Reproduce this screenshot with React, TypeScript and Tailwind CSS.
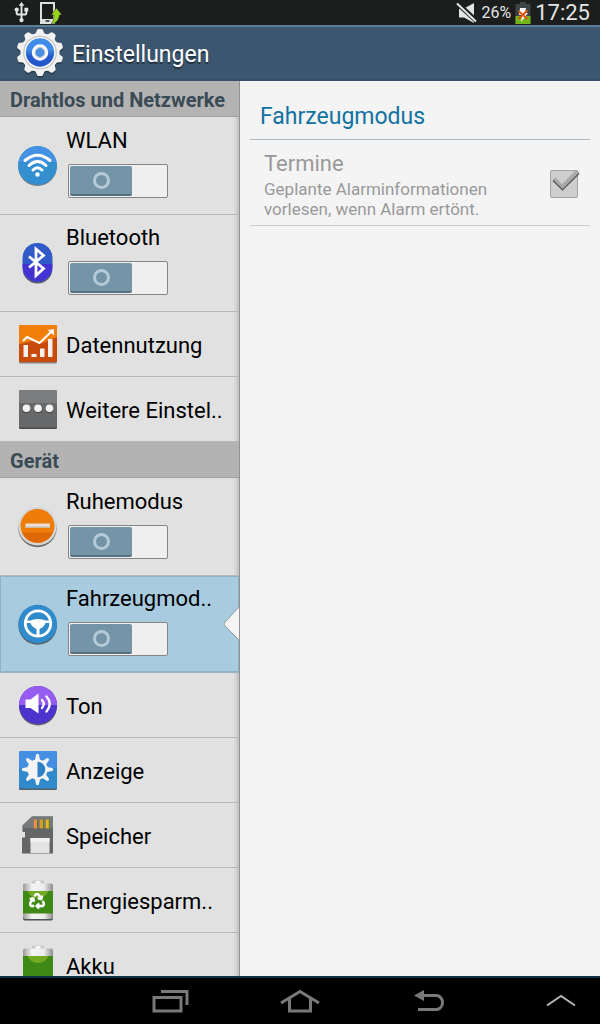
import { useState, type ReactNode } from "react";
import { MdUsb } from "react-icons/md";
import { FaRecycle } from "react-icons/fa";

function GearLogo() {
  return (
    <svg viewBox="0 0 48 50" className="h-[50px] w-12" aria-hidden="true">
      <defs>
        <linearGradient id="gear-face" x1="0" y1="0" x2="0" y2="1">
          <stop offset="0.4" stopColor="#3f8de8" />
          <stop offset="0.65" stopColor="#2458cc" />
        </linearGradient>
      </defs>
      {[["#27394a", 1.5], ["#f1f1f1", 0]].map(([fill, dy]) => (
        <g key={fill} fill={fill as string} transform={`translate(24 ${24.5 + Number(dy)})`}>
          <circle r="19.5" />
          {[0, 36, 72, 108, 144, 180, 216, 252, 288, 324].map((a) => (
            <path key={a} d="M-5.5-17.5Q-3.6-20-3.2-22Q-2.8-23.5-1.5-23.5H1.5Q2.8-23.5 3.2-22Q3.6-20 5.5-17.5Z" transform={`rotate(${a})`} />
          ))}
        </g>
      ))}
      <circle cx="24" cy="24.5" r="16.2" fill="#fff" stroke="#c4c4c8" strokeWidth="1.2" />
      <circle cx="24" cy="24.5" r="14.2" fill="url(#gear-face)" />
      <circle cx="24" cy="24.5" r="6.4" fill="#4a90e0" stroke="#fff" strokeWidth="3.6" />
      <circle cx="24" cy="24.5" r="5" fill="none" stroke="#b9bcc6" strokeWidth="1" />
    </svg>
  );
}

function Shell({ children }: { children: ReactNode }) {
  return (
    <svg viewBox="0 0 40 42" className="h-[42px] w-10" aria-hidden="true">
      {children}
    </svg>
  );
}

const WifiIcon = () => (
  <Shell>
    <circle cx="19.5" cy="21.6" r="19.4" fill="#77797c" />
    <circle cx="19.5" cy="20.5" r="19.4" fill="#338fd0" />
    <path d="M2.5 11.5A19.4 19.4 0 0 1 36.5 11.5Q38 14 38.5 17H.5Q1 14 2.5 11.5Z" fill="#4591e2" />
    <g fill="none" stroke="#fff" strokeWidth="3" strokeLinecap="round">
      <path d="M7 15.5Q19.5 5 32 15.5" />
      <path d="M11 20.5Q19.5 12.5 28 20.5" />
      <path d="M15 25Q19.5 20.5 24 25" />
    </g>
    <circle cx="19.5" cy="29.5" r="2.2" fill="#fff" />
  </Shell>
);

const BluetoothIcon = () => (
  <Shell>
    <rect x="4.7" y="2" width="29.6" height="39.5" rx="14.5" fill="#5d5d70" />
    <rect x="4.7" y="1" width="29.6" height="38.8" rx="14.5" fill="#2f5ac8" />
    <path d="M4.7 22H34.3V25A14.8 14.5 0 0 1 4.7 25Z" fill="#4433d2" />
    <path d="M11 14.5L25.500 26.500L18 33.500V7L25.500 13.500L11 25.500" fill="none" stroke="#fff" strokeWidth="2.8" />
  </Shell>
);

const DataIcon = () => (
  <Shell>
    <rect x="1" y="3" width="38" height="37.5" rx="1.5" fill="#87837f" />
    <rect x="1" y="2" width="38" height="37" rx="1.5" fill="#c94b0c" />
    <path d="M1 3.5Q1 2 2.5 2H37.5Q39 2 39 3.5V14L24 20L14 18L1 21Z" fill="#f07f0a" />
    <g fill="#f3f0ee">
      <path d="M5.500 22H10V34H5.500zM13.500 31H18.500V34H13.500zM22 25.500H26.500V34H22zM30 16H34.500V34H30z" />
      <path d="M29.500 7L36 6V12.500z" />
    </g>
    <path d="M5 18L9 14L21.500 20L34 8" fill="none" stroke="#fff" strokeWidth="2" />
  </Shell>
);

const MoreIcon = () => (
  <Shell>
    <rect x="1" y="3" width="38" height="38" rx="1.5" fill="#47494b" />
    <rect x="1" y="2" width="38" height="37.5" rx="1.5" fill="#66686a" />
    <path d="M1 3.5Q1 2 2.5 2H37.5Q39 2 39 3.5V15H1Z" fill="#7b7d7f" />
    {[8.5, 20, 31.5].map((x) => (
      <g key={x}>
        <circle cx={x} cy="21.500" r="3.8" fill="#4a4c4e" />
        <circle cx={x} cy="20.200" r="3.8" fill="#f2f2f2" />
      </g>
    ))}
  </Shell>
);

const QuietIcon = () => (
  <Shell>
    <circle cx="19.5" cy="22" r="19.2" fill="#6b6b6b" />
    <circle cx="19.5" cy="20.3" r="19.2" fill="#d6d6d6" />
    <circle cx="19.5" cy="20" r="17" fill="#ee7c08" />
    <path d="M4 26.500H35A17 17 0 0 1 4 26.500Z" fill="#dd6805" />
    <rect x="7.500" y="17.500" width="24.500" height="4.500" fill="#eadfd5" />
    <rect x="7.500" y="20.500" width="24.500" height="1.500" fill="#cdbba8" />
  </Shell>
);

const CarIcon = () => (
  <Shell>
    <circle cx="19.700" cy="22.500" r="19.300" fill="#59606b" />
    <circle cx="19.700" cy="21" r="19.300" fill="#2f8bcb" />
    <circle cx="20" cy="20.500" r="12.700" fill="none" stroke="#fff" strokeWidth="2.800" />
    <path d="M8 17.500H12.500Q15 16 20 16T27.500 17.500H32V20H27.500Q26 24 21.500 26V32.500H18.500V26Q14 24 12.500 20H8Z" fill="#fff" />
  </Shell>
);

const SoundIcon = () => (
  <Shell>
    <circle cx="20" cy="22.500" r="19" fill="#62626e" />
    <circle cx="20" cy="21" r="19" fill="#4c34cd" />
    <path d="M1 21A19 19 0 0 1 39 21Z" fill="#965df0" />
    <path d="M7.500 15.500H12.500L20.500 9.500V29.500L12.500 24H7.500Z" fill="#fff" />
    <g fill="none" stroke="#fff" strokeWidth="2.400" strokeLinecap="round">
      <path d="M24 16Q27.500 20 24 24" />
      <path d="M28.500 12.500Q35 20 28.500 27.500" />
    </g>
  </Shell>
);

const DisplayIcon = () => (
  <Shell>
    <rect x="1" y="3.500" width="38" height="37.500" rx="1.500" fill="#52616e" />
    <rect x="1" y="2" width="38" height="37.500" rx="1.500" fill="#3089cb" />
    <path d="M1 3.500Q1 2 2.500 2H37.500Q39 2 39 3.500V19H1Z" fill="#458fe2" />
    <g transform="translate(19.500 20.500)" fill="#f4f4f4">
      {[0, 45, 90, 135, 180, 225, 270, 315].map((a) => (
        <path key={a} d="M-2.600-9L-1.400-15Q0-16.500 1.400-15L2.600-9Z" transform={`rotate(${a})`} />
      ))}
      <circle r="10.200" />
      <path d="M0-7.800A7.800 7.800 0 0 1 0 7.800Z" fill="#2e81c4" />
    </g>
  </Shell>
);

const StorageIcon = () => (
  <Shell>
    <path d="M14 2.500H35V39.500H4V23.500H7V18H4.500V11.500Z" fill="#636566" />
    <path d="M14 2.500H35V14H4.500V11.500Z" fill="#777879" />
    <path d="M12.500 24H31.500V39H12.500z" fill="#e4e4e4" />
    <path d="M12.500 24H31.500V28H12.500z" fill="#f0f0f0" />
    <g strokeWidth="3.500">
      <path d="M17.500 5.500V14.500" stroke="#e98d4e" />
      <path d="M23.500 5.500V14.500" stroke="#d99d26" />
      <path d="M29.500 5.500V14.500" stroke="#e8b31b" />
    </g>
    <path d="M19.500 5.500V14.500M25.500 5.500V14.500M31.300 5.500V14.500" stroke="#4f7f2e" />
  </Shell>
);

function Battery({ children }: { children?: ReactNode }) {
  return (
    <Shell>
      <defs>
        <linearGradient id="battery-metal" x1="0" x2="1" y1="0" y2="0">
          <stop offset="0" stopColor="#999" />
          <stop offset="0.3" stopColor="#f4f4f4" />
          <stop offset="0.7" stopColor="#ececec" />
          <stop offset="1" stopColor="#8c8c8c" />
        </linearGradient>
      </defs>
      <rect x="14" y="1.500" width="12" height="5" rx="1.500" fill="#c9c9c9" />
      <rect x="17.500" y="2" width="5" height="3" fill="#f8f8f8" />
      <rect x="5" y="35" width="30" height="6.500" rx="2" fill="#4e5358" />
      <rect x="5" y="4.500" width="30" height="35.500" rx="2" fill="url(#battery-metal)" />
      <rect x="5" y="12" width="30" height="22.500" fill="#3f8a17" />
      <path d="M9.500 12H30.500Q27.500 19 20 19T9.500 12Z" fill="#74a922" />
      {children}
    </Shell>
  );
}

const SaverIcon = () => (
  <Battery>
    <FaRecycle x="11" y="14" width="18" height="18" color="#fff" stroke="#fff" strokeWidth="24" />
  </Battery>
);

const FullBatteryIcon = () => <Battery />;

type Item = { name: string; icon: () => ReactNode; toggle?: boolean; active?: boolean };

const wireless: Item[] = [
  { name: "WLAN", icon: WifiIcon, toggle: true },
  { name: "Bluetooth", icon: BluetoothIcon, toggle: true },
  { name: "Datennutzung", icon: DataIcon },
  { name: "Weitere Einstel..", icon: MoreIcon },
];

const device: Item[] = [
  { name: "Ruhemodus", icon: QuietIcon, toggle: true },
  { name: "Fahrzeugmod..", icon: CarIcon, toggle: true, active: true },
  { name: "Ton", icon: SoundIcon },
  { name: "Anzeige", icon: DisplayIcon },
  { name: "Speicher", icon: StorageIcon },
  { name: "Energiesparm..", icon: SaverIcon },
  { name: "Akku", icon: FullBatteryIcon },
];

function Toggle({ label }: { label: string }) {
  const [on, setOn] = useState(false);
  return (
    <button
      type="button"
      role="switch"
      aria-checked={on}
      aria-label={label}
      onClick={() => setOn(!on)}
      className={`ml-0.5 flex h-[34px] w-[100px] rounded-xs border border-[#858585] bg-[#efefef] p-px ${on ? "justify-end" : "justify-start"}`}
    >
      <span className="flex h-[30px] w-[62px] items-center justify-center rounded-xs border-b-2 border-[#56707f] bg-[#7494a7]">
        <span className="size-[17px] rounded-full border-3 border-[#b5cad6]" />
      </span>
    </button>
  );
}

function Row({ item }: { item: Item }) {
  const Icon = item.icon;
  return (
    <li
      className={`relative flex shrink-0 items-center gap-2 border-b pl-[18px] ${item.toggle ? "h-[97px]" : "h-[65px]"} ${
        item.active ? "border-[#a0b2bc] bg-[#a9cbdf] shadow-[inset_0_0_0_1px_#8fb2c6]" : "border-[#b9b9b9]"
      }`}
    >
      <Icon />
      {item.toggle ? (
        <div className="flex h-full flex-col gap-2 pt-2">
          <a href="#detail" className="text-[22px] leading-[30px]">{item.name}</a>
          <Toggle label={item.name} />
        </div>
      ) : (
        <a href="#detail" className="pt-1 text-[22px] leading-[30px] whitespace-nowrap">{item.name}</a>
      )}
      {item.active && (
        <svg viewBox="0 0 16 36" className="absolute top-[30px] right-0 h-9 w-4" aria-hidden="true">
          <path d="M16 1L2 16Q0 18 2 20L16 34Z" fill="#f4f4f4" />
          <path d="M16 1L2 16Q0 18 2 20L16 34" fill="none" stroke="#8f9ca4" />
        </svg>
      )}
    </li>
  );
}

function Group({ title, items }: { title: string; items: Item[] }) {
  return (
    <section>
      <h2 className="mb-px h-9 border-b border-[#a2a2a2] bg-[#b3b3b3] pl-2.5 text-[20px] leading-[38px] font-bold whitespace-nowrap text-[#3b4b55]">
        {title}
      </h2>
      <ul>
        {items.map((item) => (
          <Row key={item.name} item={item} />
        ))}
      </ul>
    </section>
  );
}

function StatusBar() {
  return (
    <div className="flex h-[25px] shrink-0 items-center bg-[#1c1d1d] text-[#e3e5e6]">
      <MdUsb className="ml-2.5 size-[23px]" aria-hidden="true" />
      <svg viewBox="0 0 24 24" className="ml-1.5 size-6" aria-hidden="true">
        <path d="M2 2H15V22H2Z" fill="none" stroke="#dfe1e1" strokeWidth="2" />
        <path d="M2 18H15V22H2Z" fill="#dfe1e1" />
        <path d="M6.500 20H10.500" stroke="#222" strokeWidth="1.500" />
        <path d="M17.500 7L23 14H20.500Q20 21.500 12 23.500Q15.500 19 15 14H12Z" fill="#98d41a" stroke="#1c1d1d" strokeWidth="0.500" />
      </svg>
      <svg viewBox="0 0 22 22" className="ml-auto h-[22px] w-[22px]" aria-hidden="true">
        <path d="M3 6.500H8L18 1V21L8 15.500H3Z" fill="#e3e5e6" />
        <path d="M1.500 1.500L20 18.500" stroke="#1c1d1d" strokeWidth="5" />
        <path d="M1 1.500L20 19.500" stroke="#e3e5e6" strokeWidth="2" />
      </svg>
      <span className="ml-1 text-[16px] leading-[25px]">26%</span>
      <svg viewBox="0 0 16 22" className="ml-1 h-[22px] w-4" aria-hidden="true">
        <path d="M5 0H11V2H15.500V22H.5V2H5Z" fill="#3c4447" />
        <path d="M.5 14H15.500V22H.5Z" fill="#75b51c" />
        <path d="M5 6H11L10 11H13L6 20L7 13H4Z" fill="#fff" />
        <path d="M3.500 9L12.500 17M12.500 8.500L3.500 17" stroke="#e3530c" strokeWidth="2" />
      </svg>
      <span className="mr-2.5 ml-1 text-[22px] leading-[25px]">17:25</span>
    </div>
  );
}

function NavBar() {
  return (
    <nav className="grid h-12 shrink-0 grid-cols-[1fr_130px_130px_130px_105px] items-center border-t-2 border-[#0d3248] bg-black pb-0.5 text-[#77797b]">
      <span />
      <button type="button" aria-label="Letzte Apps" className="flex justify-center">
        <svg viewBox="0 0 38 26" className="h-[26px] w-[38px]" fill="none" stroke="currentColor" strokeWidth="3">
          <path d="M3 10.500H30V24H3ZM10 4.500H36V18" />
        </svg>
      </button>
      <button type="button" aria-label="Startseite" className="flex justify-center">
        <svg viewBox="0 0 40 26" className="h-[26px] w-10" fill="none" stroke="currentColor" strokeWidth="3">
          <path d="M1 16L20 4.500L39 16M9.500 11.500V24H30.500V11.500" />
        </svg>
      </button>
      <button type="button" aria-label="Zurück" className="flex justify-center">
        <svg viewBox="0 0 32 26" className="h-[26px] w-8" fill="none" stroke="currentColor" strokeWidth="3">
          <path d="M9 8.500H23A7.200 7.200 0 0 1 23 22.500H4" />
          <path d="M0 8.500L10 3V14Z" fill="currentColor" stroke="none" />
        </svg>
      </button>
      <button type="button" aria-label="Menü öffnen" className="flex justify-end pr-6 text-[#b5b5b5]">
        <svg viewBox="0 0 30 26" className="h-[26px] w-[30px]" fill="none" stroke="currentColor" strokeWidth="2">
          <path d="M1 18.500L15 9L29 18.500" />
        </svg>
      </button>
    </nav>
  );
}

export default function App() {
  return (
    <div className="flex h-screen flex-col overflow-hidden bg-[#f4f4f4] font-[Roboto,sans-serif] text-black">
      <StatusBar />
      <header className="flex h-14 shrink-0 items-center gap-2 border-t-2 border-b-2 border-t-[#5c7d97] border-b-[#34506a] bg-[#3b566e] pl-4">
        <GearLogo />
        <h1 className="pt-1 text-[23px] leading-[30px] text-white [text-shadow:0_2px_1px_#20303f]">Einstellungen</h1>
      </header>
      <div className="flex min-h-0 flex-1">
        <aside className="w-2/5 overflow-hidden border-r border-[#929292] bg-[#e1e1e1] shadow-[inset_-6px_0_4px_-4px_#b9b9b9]">
          <Group title="Drahtlos und Netzwerke" items={wireless} />
          <Group title="Gerät" items={device} />
        </aside>
        <main id="detail" className="flex-1 px-2.5 pt-5">
          <h2 className="border-b border-[#aab7c0] px-2.5 pt-px pb-[7px] text-[23px] leading-[30px] text-[#1272a2]">Fahrzeugmodus</h2>
          <div className="flex items-center justify-between border-b border-[#cdcdcd] pt-2 pr-3 pb-1.5 pl-3.5">
            <label htmlFor="events" className="max-w-[250px] text-[#999]">
              <span className="block text-[22px] leading-[31px]">Termine</span>
              <span className="block text-[17px] leading-5">Geplante Alarminformationen vorlesen, wenn Alarm ertönt.</span>
            </label>
            <span className="relative">
              <input
                id="events"
                type="checkbox"
                defaultChecked
                disabled
                className="block size-7 appearance-none rounded-xs border border-[#a3a3a3] bg-[#cecece]"
              />
              <svg viewBox="0 0 30 28" className="pointer-events-none absolute top-0 left-0 h-7 w-[30px]" aria-hidden="true">
                <path d="M4 9L12 17L28 1" fill="none" stroke="#a9a9a9" strokeWidth="4" />
                <path d="M3 10.500L12.500 20L29 3.500" fill="none" stroke="#555" strokeWidth="1.200" />
              </svg>
            </span>
          </div>
        </main>
      </div>
      <NavBar />
    </div>
  );
}
